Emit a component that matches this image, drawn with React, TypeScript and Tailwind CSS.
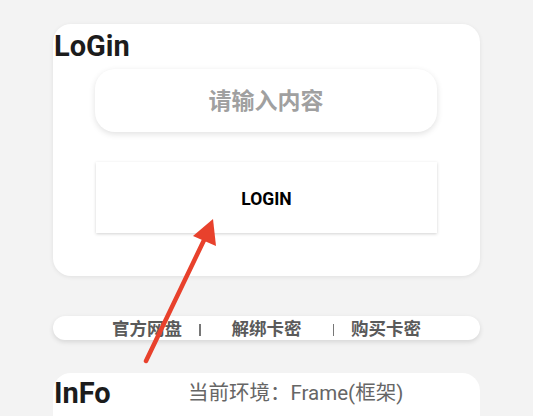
import React from "react";

export default function App() {
  return (
    <div
      className="relative w-[533px] h-[416px] overflow-hidden bg-[#f3f3f3]"
      style={{ fontFamily: 'Roboto, "Noto Sans CJK SC", sans-serif' }}
    >
      <div className="flex flex-col pt-[24px] px-[53px]">
        {/* Login card */}
        <div className="relative h-[252px] w-[427px] rounded-[18px] bg-white shadow-[0_1px_4px_rgba(0,0,0,0.08)]">
          <div className="pl-[1px] pt-[5px] text-[29px] font-bold leading-[34px] text-[#1c1c1c]">LoGin</div>
          <div className="ml-[42px] mt-[6px] flex h-[63px] w-[342px] items-center justify-center rounded-[20px] bg-white pt-[4px] shadow-[0_2px_6px_rgba(0,0,0,0.12)]">
            <span className="text-[23px] font-bold text-[#a0a0a0]">请输入内容</span>
          </div>
          <div className="ml-[43px] mt-[30px] flex h-[71px] w-[341px] items-center justify-center bg-white pt-[3px] shadow-[0_1px_3px_rgba(0,0,0,0.18)]">
            <span className="text-[17.5px] font-bold text-black">LOGIN</span>
          </div>
        </div>

        {/* Links bar */}
        <div className="mt-[40px] flex h-[24px] w-[427px] items-center rounded-full bg-white text-[17.5px] font-bold text-[#5a5a5a] shadow-[0_2px_5px_rgba(0,0,0,0.12)]">
          <span className="ml-[59px] w-[70px] pt-[1px] leading-[24px]">官方网盘</span>
          <div className="ml-[17px] mt-[3px] h-[12px] w-[1.5px] bg-[#777]" />
          <span className="ml-[31px] w-[70px] pt-[1px] leading-[24px]">解绑卡密</span>
          <div className="ml-[31px] mt-[3px] h-[12px] w-[1.5px] bg-[#777]" />
          <span className="ml-[17px] w-[70px] pt-[1px] leading-[24px]">购买卡密</span>
        </div>

        {/* Info card */}
        <div className="mt-[33px] flex h-[80px] w-[427px] items-start rounded-t-[18px] bg-white">
          <span className="w-[135px] pl-[1px] pt-[3px] text-[29px] font-bold leading-[34px] text-[#1c1c1c]">InFo</span>
          <span className="pt-[6px] text-[20.5px] leading-[28px] text-[#666]">当前环境：Frame(框架)</span>
        </div>
      </div>

      <svg className="pointer-events-none absolute left-0 top-0" width="533" height="416">
        <line x1="146" y1="361" x2="206" y2="236" stroke="#e8412c" strokeWidth="4.5" strokeLinecap="round" />
        <polygon points="213,219 193,236 216,246" fill="#e8412c" />
      </svg>
    </div>
  );
}
